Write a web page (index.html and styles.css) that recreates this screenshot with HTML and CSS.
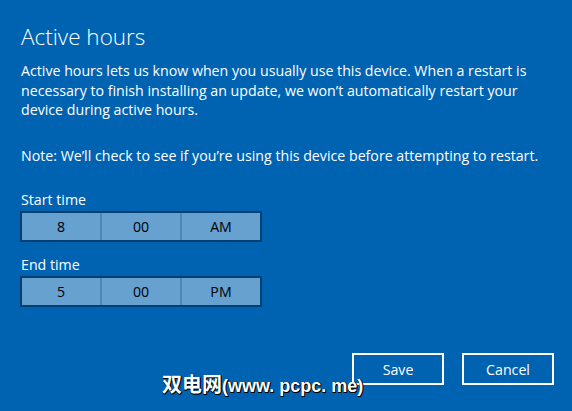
FILE: index.html
```html
<!DOCTYPE html>
<html>
<head>
<meta charset="utf-8">
<link rel="stylesheet" href="styles.css">
</head>
<body>
<div class="dialog">
  <h1 class="title">Active hours</h1>
  <p class="text">Active hours lets us know when you usually use this device. When a restart is necessary to finish installing an update, we won’t automatically restart your device during active hours.</p>
  <p class="text note">Note: We’ll check to see if you’re using this device before attempting to restart.</p>
  <div class="field">
    <div class="label">Start time</div>
    <div class="picker"><span class="cell">8</span><span class="cell">00</span><span class="cell">AM</span></div>
  </div>
  <div class="field">
    <div class="label">End time</div>
    <div class="picker"><span class="cell">5</span><span class="cell">00</span><span class="cell">PM</span></div>
  </div>
  <div class="footer">
    <span class="watermark"><span class="wm-cjk">双电网</span>(www. pcpc. me)</span>
    <div class="buttons">
      <button class="btn">Save</button>
      <button class="btn">Cancel</button>
    </div>
  </div>
</div>
</body>
</html>
```
FILE: styles.css
```css
html, body {
  margin: 0;
  padding: 0;
  background: #0063b1;
  width: 572px;
  height: 411px;
  overflow: hidden;
}
.dialog {
  font-family: "Open Sans", "Noto Sans", sans-serif;
  color: #fff;
  padding: 22px 18px 0 21px;
  position: relative;
  height: 389px;
}
.title {
  margin: 0;
  font-weight: 300;
  font-size: 22.5px;
  line-height: 30px;
}
.text {
  margin: 9px 0 0;
  font-size: 14.2px;
  line-height: 19.5px;
}
.note {
  margin-top: 26px;
}
.field {
  margin-top: 25px;
}
.field + .field {
  margin-top: 13px;
}
.label {
  font-size: 14.2px;
  line-height: 20px;
  margin-bottom: 1px;
}
.picker {
  display: flex;
  width: 238px;
  height: 27px;
  margin-left: -1px;
  border: 2px solid #003f72;
  background: #66a1d0;
}
.cell {
  flex: 1;
  display: flex;
  align-items: center;
  justify-content: center;
  color: #000;
  font-size: 14.2px;
}
.cell + .cell {
  border-left: 2px solid #4b86b6;
}
.footer {
  position: absolute;
  left: 0;
  right: 0;
  top: 353px;
}
.buttons {
  display: flex;
  justify-content: flex-end;
  gap: 18px;
  padding-right: 18px;
}
.btn {
  width: 92px;
  height: 32px;
  background: transparent;
  border: 2px solid #fff;
  color: #fff;
  font-family: "Open Sans", "Noto Sans", sans-serif;
  font-size: 14.2px;
  padding: 0;
}
.watermark {
  position: absolute;
  left: 162px;
  top: 20px;
  font-family: "Liberation Sans", "Noto Sans CJK SC", sans-serif;
  font-weight: 700;
  font-size: 18px;
  line-height: 22px;
  color: #fff;
  text-shadow: 1px 1px 0 #000, 1px 0 0 #000, 0 1px 0 #000;
  z-index: 2;
}
.wm-cjk {
  font-family: "Noto Sans CJK SC", sans-serif;
  font-size: 20px;
}
```
